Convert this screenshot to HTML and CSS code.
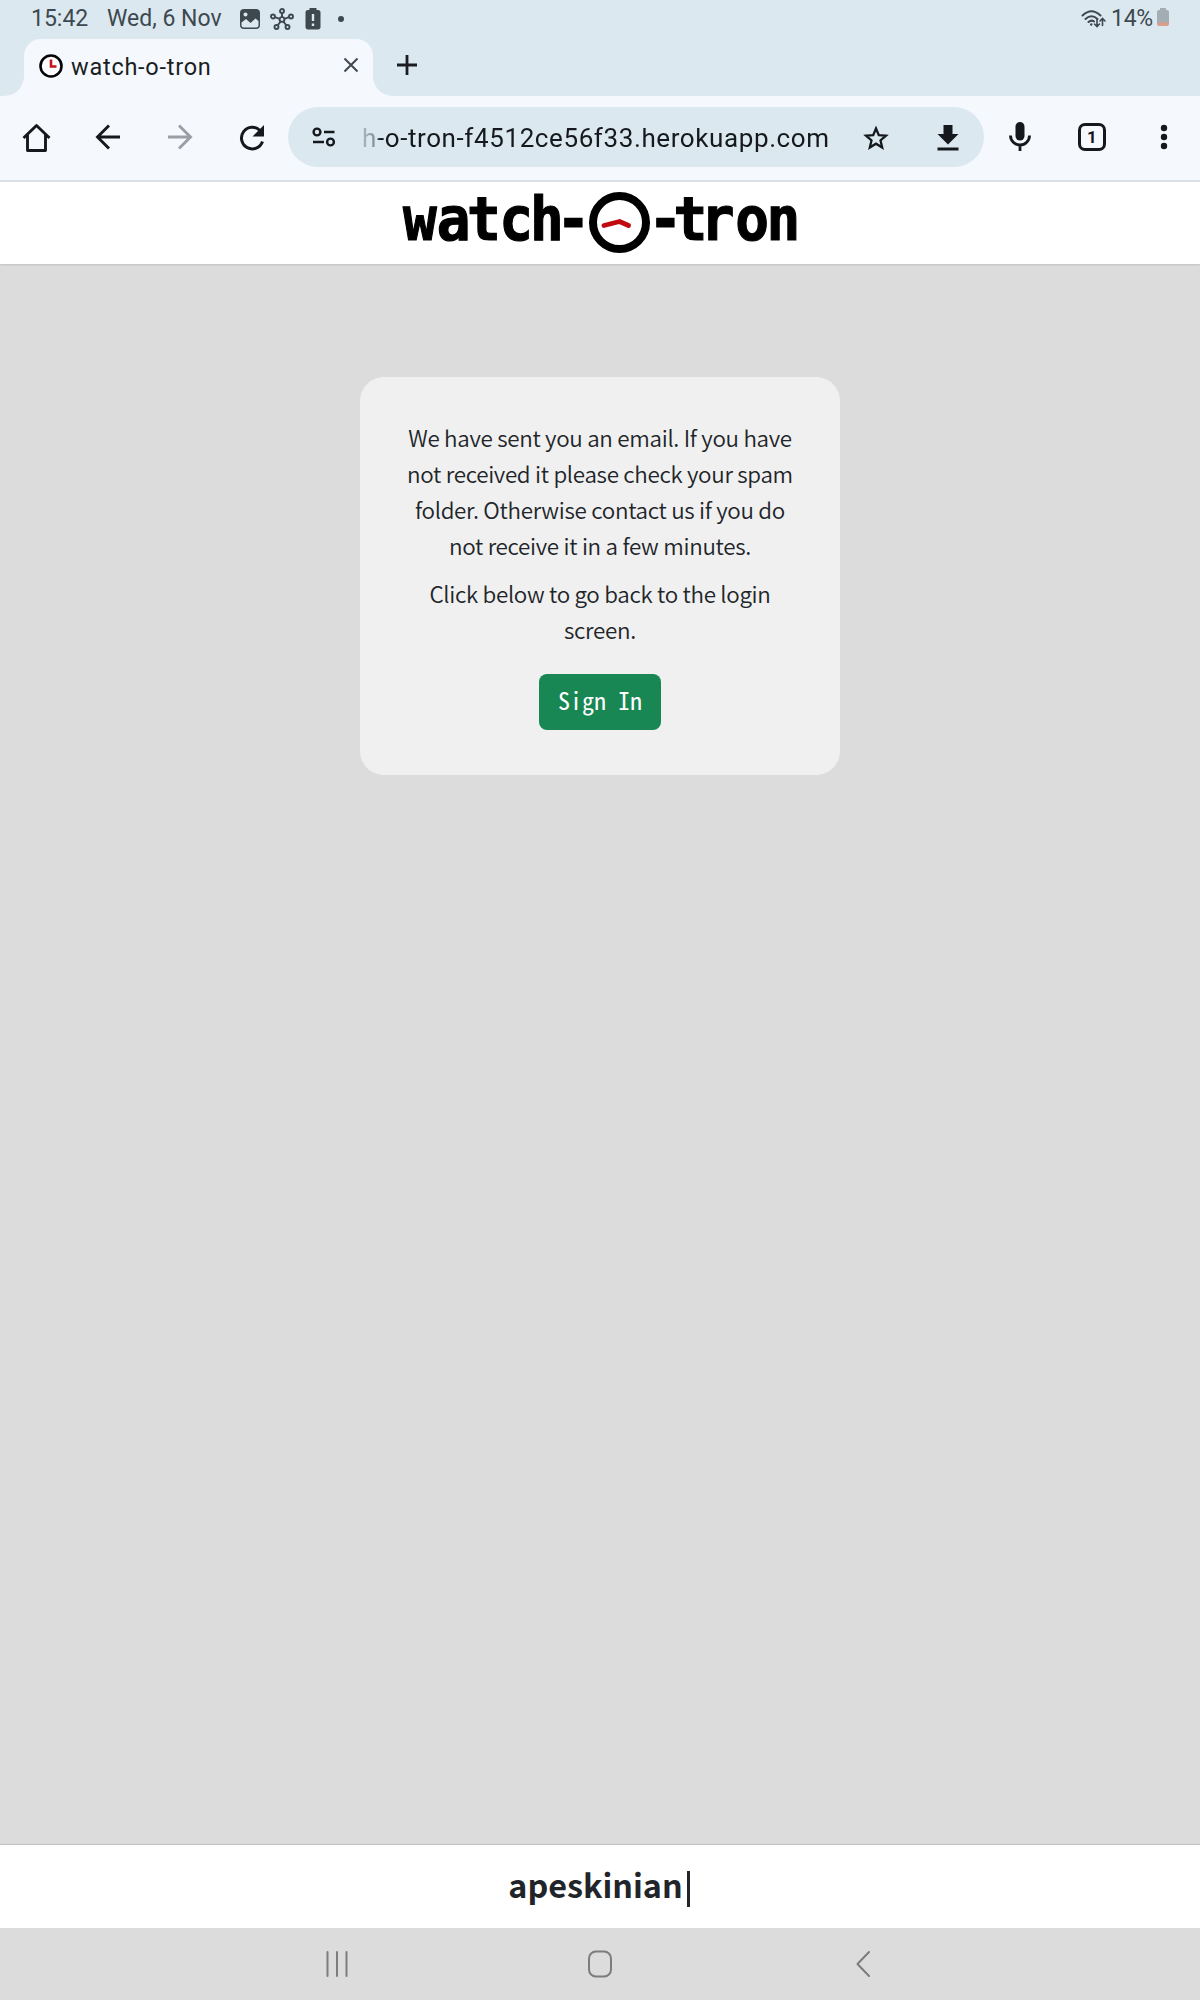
FILE: index.html
```
<!DOCTYPE html>
<html lang="en">
<head>
<meta charset="utf-8">
<title>watch-o-tron</title>
<link rel="stylesheet" href="styles.css">
</head>
<body>
<div class="screen">
  <div class="top">
    <div class="status">
      <span class="time">15:42</span>
      <span class="date">Wed, 6 Nov</span>
      <svg class="st-pic" width="22" height="22" viewBox="0 0 22 22"><rect x="1" y="1" width="20" height="20" rx="4" fill="#3d484f"/><path d="M2.5 14.5 7 11l4.500 4 5-4.500 3 2.500v4a2.500 2.500 0 0 1-2.500 2.500H5A2.500 2.500 0 0 1 2.500 17z" fill="#dce8f0"/><circle cx="6.500" cy="6.500" r="2" fill="#dce8f0"/></svg>
      <svg class="st-hub" width="24" height="22" viewBox="0 0 24 22" fill="none" stroke="#3d484f" stroke-width="1.900"><circle cx="12" cy="11.500" r="2.400"/><circle cx="12" cy="3" r="2"/><circle cx="3" cy="8.500" r="2"/><circle cx="21" cy="8.500" r="2"/><circle cx="6.500" cy="19" r="2"/><circle cx="17.500" cy="19" r="2"/><path d="M12 5v4M5 9.200l4.600 1.600M19 9.200l-4.600 1.600M7.700 17.300l2.900-3.800M16.300 17.300l-2.900-3.800"/></svg>
      <svg class="st-bat" width="16" height="22" viewBox="0 0 16 22"><path d="M4.500 0h7v2H13a2.500 2.500 0 0 1 2.500 2.500v14A2.500 2.500 0 0 1 13 21.500H3A2.500 2.500 0 0 1 .500 18.500v-14A2.500 2.500 0 0 1 3 2h1.500z" fill="#3d484f"/><path d="M8 6v7M8 15.500v2.500" stroke="#dce8f0" stroke-width="2.400"/></svg>
      <span class="st-dot"></span>
      <svg class="st-wifi" width="26" height="20" viewBox="0 0 26 20" fill="none" stroke="#3d484f" stroke-width="2" stroke-linecap="round"><path d="M1.500 6.500Q10.500-2 19.500 6.500M4.500 10q6-5.500 12 0M7.500 13q3-2.500 5.500-.500"/><path d="M10.200 15.500v.1" stroke-width="2.400"/><path d="M16 10v7M13.500 15l2.500 2.500 2.500-2.500M21.500 16.500v-7M19 12l2.500-2.500L24 12" stroke-width="1.600"/></svg>
      <span class="pct">14%</span>
      <svg class="st-level" width="12" height="19" viewBox="0 0 12 19"><path d="M3 0h6v2h1a2 2 0 0 1 2 2v11H0V4a2 2 0 0 1 2-2h1z" fill="#a3adb3"/><path d="M0 14.500h12V16a2 2 0 0 1-2 2H2a2 2 0 0 1-2-2z" fill="#dc9c8a"/></svg>
    </div>
    <div class="tabs">
      <svg class="flare" width="24" height="18" viewBox="0 0 24 18"><path d="M0 18h24V0Q21 17 4 18z" fill="#f5f9fe"/></svg>
      <div class="tab">
        <svg width="24" height="24" viewBox="0 0 24 24"><circle cx="12" cy="12" r="10.500" fill="#fff" stroke="#050505" stroke-width="2.600"/><path d="M12 5.500V12.500h5.500" fill="none" stroke="#c4141c" stroke-width="2.600"/></svg>
        <span class="title">watch-o-tron</span>
        <svg class="close" width="16" height="16" viewBox="0 0 16 16"><path d="M1.500 1.500l13 13M14.500 1.500l-13 13" stroke="#42484d" stroke-width="2"/></svg>
      </div>
      <svg class="flare" width="24" height="18" viewBox="0 0 24 18"><path d="M24 18H0V0Q3 17 20 18z" fill="#f5f9fe"/></svg>
      <svg class="plus" width="22" height="22" viewBox="0 0 22 22"><path d="M11 1v20M1 11h20" stroke="#1a1e22" stroke-width="2.800"/></svg>
    </div>
  </div>

  <div class="toolbar">
    <span class="cell"><svg width="36" height="36" viewBox="0 0 36 36" fill="none" stroke="#15191d" stroke-width="2.900"><path d="M5.500 19 18.500 6.500 31.500 19M9.500 16v15.500h18V16" stroke-linejoin="round"/></svg></span>
    <span class="cell"><svg width="36" height="36" viewBox="0 0 36 36" fill="none" stroke="#15191d" stroke-width="2.900"><path d="M30 18H8M19 6.500 7.500 18 19 29.500"/></svg></span>
    <span class="cell"><svg width="36" height="36" viewBox="0 0 36 36" fill="none" stroke="#9b9fa4" stroke-width="2.900"><path d="M6 18h22M17 6.500 28.500 18 17 29.500"/></svg></span>
    <span class="cell"><svg width="36" height="36" viewBox="0 0 36 36"><path d="M28.500 22.500A10.800 10.800 0 1 1 26 11.500" fill="none" stroke="#15191d" stroke-width="3"/><path d="M30 6v11.500H18.500z" fill="#15191d"/></svg></span>
    <div class="pill">
      <span class="cell"><svg width="36" height="36" viewBox="0 0 36 36" fill="none" stroke="#15191d" stroke-width="2.400"><circle cx="11" cy="13" r="3.400"/><path d="M18 13h10.500M7 23h11"/><circle cx="24.500" cy="23" r="3.400"/></svg></span>
      <span class="url">h-o-tron-f4512ce56f33.herokuapp.com</span>
      <span class="cell"><svg width="36" height="36" viewBox="0 0 36 36"><path d="M18 8.500l2.800 6.600 7.200.6-5.500 4.700 1.700 7.100L18 23.700l-6.200 3.800 1.700-7.100L8 15.700l7.200-.6z" transform="translate(0 1)" fill="none" stroke="#15191d" stroke-width="2.300"/></svg></span>
      <span class="cell"><svg width="36" height="36" viewBox="0 0 36 36" fill="#15191d"><path d="M13.500 6h9v9H28.500L18 25.500 7.500 15h6zM7.500 28.500h21v3h-21z"/></svg></span>
    </div>
    <span class="cell"><svg width="36" height="36" viewBox="0 0 36 36"><rect x="13.500" y="3" width="9" height="18.500" rx="4.500" fill="#15191d"/><path d="M8.500 16.500a9.500 9.500 0 0 0 19 0M18 26v6" fill="none" stroke="#15191d" stroke-width="2.800"/></svg></span>
    <span class="cell"><span class="count">1</span></span>
    <span class="cell"><svg width="36" height="36" viewBox="0 0 36 36" fill="#15191d"><circle cx="18" cy="9" r="3.200"/><circle cx="18" cy="18" r="3.200"/><circle cx="18" cy="27" r="3.200"/></svg></span>
  </div>

  <header class="brand">
    <svg width="420" height="82" viewBox="390 182 420 82" role="img" aria-label="watch-o-tron">
      <g transform="scale(.92 1)" class="logo"><text y="240" x="456.500 493 526 561 594.500 623.400">watch-</text><text y="240" x="723.400 750.500 780 817.500 851.500">-tron</text></g>
      <circle cx="619.500" cy="222.500" r="26.500" fill="#fff" stroke="#000" stroke-width="8"/>
      <path d="M604 225.500l15.500-4 9 4" fill="none" stroke="#c00a10" stroke-width="4.800" stroke-linecap="round" stroke-linejoin="round"/>
    </svg>
  </header>

  <main class="page">
    <section class="card">
      <p>We have sent you an email. If you have<br>not received it please check your spam<br>folder. Otherwise contact us if you do<br>not receive it in a few minutes.</p>
      <p>Click below to go back to the login<br>screen.</p>
      <a class="btn">Sign In</a>
    </section>
  </main>

  <footer class="foot"><span>apeskinian</span><i class="caret"></i></footer>

  <nav class="nav">
    <svg width="26" height="30" viewBox="0 0 26 30" stroke="#7c7c7c" stroke-width="2" stroke-linecap="round"><path d="M3.500 3v24M13 3v24M22.500 3v24"/></svg>
    <svg width="26" height="30" viewBox="0 0 26 30" fill="none" stroke="#7c7c7c" stroke-width="2"><rect x="2" y="2.500" width="22" height="25" rx="7"/></svg>
    <svg width="26" height="30" viewBox="0 0 26 30" fill="none" stroke="#7c7c7c" stroke-width="2" stroke-linecap="round" stroke-linejoin="round"><path d="M19 3 7.500 15 19 27"/></svg>
  </nav>
</div>
</body>
</html>
```
FILE: styles.css
```
* { box-sizing: border-box; }
body { margin: 0; }
svg { display: block; flex: none; }
.screen {
  width: 1200px;
  height: 2000px;
  display: flex;
  flex-direction: column;
  overflow: hidden;
  background: #dcdcdc;
  font-family: Roboto, sans-serif;
  color: #212529;
}
.top { height: 96px; background: #dce8f0; }
.status {
  height: 39px;
  padding: 0 31px 2px 31px;
  display: flex;
  align-items: center;
  font-size: 23px;
  color: #3d484f;
  white-space: nowrap;
}
.time { width: 76px; }
.date { width: 132px; }
.st-hub { margin-left: 9px; }
.st-bat { margin-left: 11px; }
.st-dot { width: 6px; height: 6px; margin-left: 17px; border-radius: 50%; background: #3d484f; }
.st-wifi { margin-left: auto; }
.pct { width: 43px; margin: 0 3px 0 4px; letter-spacing: -.3px; }
.st-level { margin-top: -2px; }
.tabs { height: 57px; display: flex; align-items: flex-end; }
.tab {
  width: 349px;
  height: 57px;
  padding: 0 14px 3px 15px;
  display: flex;
  align-items: center;
  border-radius: 17px 17px 0 0;
  background: #f5f9fe;
}
.title { margin-left: 8px; padding-top: 2px; font-size: 23.5px; letter-spacing: .75px; color: #1a1e22; }
.close { margin: -3px 0 0 auto; }
.plus { margin: 0 0 20px -1px; }
.toolbar {
  height: 86px;
  padding-bottom: 2px;
  display: flex;
  align-items: center;
  background: #f5f9fe;
  border-bottom: 2px solid #dce1e6;
}
.cell { width: 72px; flex: none; display: flex; justify-content: center; align-items: center; }
.pill {
  width: 696px;
  height: 60px;
  display: flex;
  align-items: center;
  border-radius: 30px;
  background: #dce8f0;
}
.url {
  width: 480px;
  padding: 2px 0 0 2px;
  font-size: 26px;
  letter-spacing: .6px;
  white-space: nowrap;
  color: transparent;
  background: linear-gradient(90deg, #b4bec5 0, #84909a 15px, #15191d 20px);
  background-clip: text;
}
.count {
  width: 28px;
  height: 28px;
  border: 3px solid #15191d;
  border-radius: 7px;
  font-size: 17px;
  font-weight: 700;
  line-height: 22px;
  text-align: center;
  color: #15191d;
}
.brand {
  height: 82px;
  display: flex;
  justify-content: center;
  background: #fff;
  box-shadow: 0 1px 2px rgba(0, 0, 0, .12);
}
.logo {
  font-family: "DejaVu Sans Mono", monospace;
  font-weight: 700;
  font-size: 61px;
  text-anchor: middle;
  fill: #000;
  stroke: #000;
  stroke-width: 1.2px;
}
.page { flex: 1; padding-top: 113px; }
.card {
  width: 480px;
  height: 398px;
  margin: 0 auto;
  padding: 42px 0 0;
  border-radius: 24px;
  background: #f0f0f0;
  text-align: center;
  font-family: "Noto Sans CJK SC", sans-serif;
  font-size: 22.4px;
  font-weight: 350;
  letter-spacing: -.31px;
  line-height: 36px;
}
.card p { margin: 0 0 12px; white-space: nowrap; }
.btn {
  width: 122px;
  height: 56px;
  display: block;
  border-radius: 8px;
  background: #198754;
  color: #fff;
  font-family: "Noto Sans Mono CJK SC", "DejaVu Sans Mono", monospace;
  font-size: 24px;
  font-weight: 400;
  letter-spacing: 0;
  line-height: 52px;
}
.card p + .btn { margin: 27px auto 0; }
.foot {
  height: 83px;
  padding-right: 2px;
  display: flex;
  justify-content: center;
  align-items: center;
  background: #fff;
  box-shadow: 0 -1px 1px rgba(0, 0, 0, .1);
  font-family: "Noto Sans CJK SC", sans-serif;
  font-weight: 700;
  font-size: 32.3px;
}
.foot span { padding-bottom: 6px; }
.caret { width: 3px; height: 36px; margin: 4px 0 0 4px; background: #212529; }
.nav { height: 72px; padding-bottom: 1px; display: flex; align-items: center; justify-content: center; gap: 237px; }
```
